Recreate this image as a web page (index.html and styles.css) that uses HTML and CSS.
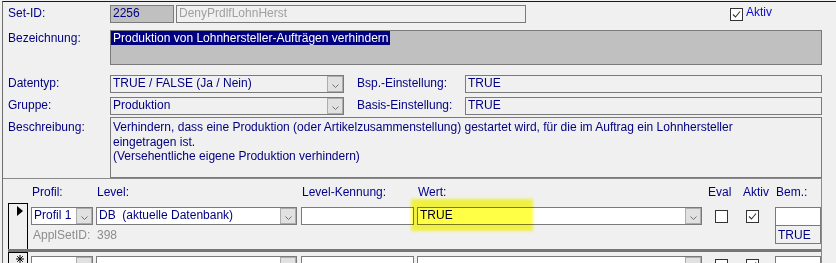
FILE: index.html
```html
<!DOCTYPE html>
<html lang="de">
<head>
<meta charset="utf-8">
<title>Set-ID 2256</title>
<link rel="stylesheet" href="styles.css">
</head>
<body>
<div class="form">
  <div class="row r1">
    <div class="lbl">Set-ID:</div>
    <div class="fld fld-id">2256</div>
    <div class="fld fld-name">DenyPrdlfLohnHerst</div>
    <div class="chk-top">
      <span class="cb"><svg width="11" height="11" viewBox="0 0 11 11"><polyline points="2,5.5 4.5,8 9,2.5" fill="none" stroke="#333" stroke-width="1.1"/></svg></span>
      <span class="chk-lbl">Aktiv</span>
    </div>
  </div>
  <div class="row r2">
    <div class="lbl lbl-bez">Bezeichnung:</div>
    <div class="fld fld-bez"><span class="sel">Produktion von Lohnhersteller-Aufträgen verhindern</span></div>
  </div>
  <div class="row r3">
    <div class="lbl">Datentyp:</div>
    <div class="combo combo-top"><span class="val">TRUE / FALSE (Ja / Nein)</span><span class="btn"><svg width="7" height="4" viewBox="0 0 7 4"><polyline points="0.5,0.5 3.5,3.5 6.5,0.5" fill="none" stroke="#707070" stroke-width="1"/></svg></span></div>
    <div class="lbl lbl2">Bsp.-Einstellung:</div>
    <div class="fld fld-set">TRUE</div>
  </div>
  <div class="row r4">
    <div class="lbl">Gruppe:</div>
    <div class="combo combo-top"><span class="val">Produktion</span><span class="btn"><svg width="7" height="4" viewBox="0 0 7 4"><polyline points="0.5,0.5 3.5,3.5 6.5,0.5" fill="none" stroke="#707070" stroke-width="1"/></svg></span></div>
    <div class="lbl lbl2">Basis-Einstellung:</div>
    <div class="fld fld-set">TRUE</div>
  </div>
  <div class="row r5">
    <div class="lbl lbl-desc">Beschreibung:</div>
    <div class="fld fld-desc">Verhindern, dass eine Produktion (oder Artikelzusammenstellung) gestartet wird, für die im Auftrag ein Lohnhersteller<br>eingetragen ist.<br>(Versehentliche eigene Produktion verhindern)</div>
  </div>

  <div class="sub">
    <div class="grid shead">
      <div></div>
      <div class="h">Profil:</div>
      <div class="h">Level:</div>
      <div class="h">Level-Kennung:</div>
      <div class="h">Wert:</div>
      <div class="h h0">Eval</div>
      <div class="h h0">Aktiv</div>
      <div class="h h0">Bem.:</div>
    </div>

    <div class="grid rec">
      <div class="selector"><span class="tri"></span></div>
      <div class="cell g2"><div class="combo combo-w c-profil"><span class="val">Profil 1</span><span class="btn"><svg width="7" height="4" viewBox="0 0 7 4"><polyline points="0.5,0.5 3.5,3.5 6.5,0.5" fill="none" stroke="#707070" stroke-width="1"/></svg></span></div></div>
      <div class="cell g3"><div class="combo combo-w c-level"><span class="val">DB&nbsp;&nbsp;(aktuelle Datenbank)</span><span class="btn"><svg width="7" height="4" viewBox="0 0 7 4"><polyline points="0.5,0.5 3.5,3.5 6.5,0.5" fill="none" stroke="#707070" stroke-width="1"/></svg></span></div></div>
      <div class="cell g4"><div class="fld fld-w c-kenn"></div></div>
      <div class="cell g5 wert-cell">
        <div class="combo combo-w c-wert"><span class="val">TRUE</span><span class="btn"><svg width="7" height="4" viewBox="0 0 7 4"><polyline points="0.5,0.5 3.5,3.5 6.5,0.5" fill="none" stroke="#707070" stroke-width="1"/></svg></span></div>
        <div class="marker"></div>
      </div>
      <div class="cell g6"><span class="cb cb-eval"></span></div>
      <div class="cell g7"><span class="cb cb-akt"><svg width="11" height="11" viewBox="0 0 11 11"><polyline points="2,5.5 4.5,8 9,2.5" fill="none" stroke="#333" stroke-width="1.1"/></svg></span></div>
      <div class="cell bem-cell"><div class="bem"><div class="bem-top"></div><div class="bem-val">TRUE</div></div></div>
      <div class="appl">ApplSetID:</div>
      <div class="appl appl-v">398</div>
    </div>

    <div class="grid rec rec-new">
      <div class="selector"><svg class="star" width="8" height="8" viewBox="0 0 8 8"><path d="M4 0V8M0 4H8M1.2 1.2L6.8 6.8M6.8 1.2L1.2 6.8" stroke="#000" stroke-width="1" fill="none"/></svg></div>
      <div class="cell g2"><div class="combo combo-w c-profil"><span class="val"></span><span class="btn"><svg width="7" height="4" viewBox="0 0 7 4"><polyline points="0.5,0.5 3.5,3.5 6.5,0.5" fill="none" stroke="#707070" stroke-width="1"/></svg></span></div></div>
      <div class="cell g3"><div class="combo combo-w c-level"><span class="val"></span><span class="btn"><svg width="7" height="4" viewBox="0 0 7 4"><polyline points="0.5,0.5 3.5,3.5 6.5,0.5" fill="none" stroke="#707070" stroke-width="1"/></svg></span></div></div>
      <div class="cell g4"><div class="fld fld-w c-kenn"></div></div>
      <div class="cell g5"><div class="combo combo-w c-wert"><span class="val"></span><span class="btn"><svg width="7" height="4" viewBox="0 0 7 4"><polyline points="0.5,0.5 3.5,3.5 6.5,0.5" fill="none" stroke="#707070" stroke-width="1"/></svg></span></div></div>
      <div class="cell g6"><span class="cb cb-eval"></span></div>
      <div class="cell g7"><span class="cb cb-akt"><svg width="11" height="11" viewBox="0 0 11 11"><polyline points="2,5.5 4.5,8 9,2.5" fill="none" stroke="#333" stroke-width="1.1"/></svg></span></div>
      <div class="cell bem-cell"><div class="bem"><div class="bem-top"></div></div></div>
    </div>
  </div>
</div>
</body>
</html>
```

FILE: styles.css
```css
html, body {
  margin: 0;
  padding: 0;
  overflow: hidden;
  background: #f0f0f0;
}
body {
  font-family: "Liberation Sans", Arial, sans-serif;
  font-size: 12px;
  color: #000080;
  width: 836px;
  height: 263px;
}
.form {
  box-sizing: border-box;
  margin: 1px 0 0 2px;
  height: 262px;
  overflow: hidden;
  border-top: 1px solid #1a1a1a;
  border-left: 1px solid #6e6e6e;
  padding-left: 5px;
}
.row {
  display: flex;
  align-items: flex-start;
}
.r1 { margin-top: 3px; }
.r2 { margin-top: 7px; }
.r3 { margin-top: 10px; }
.r4 { margin-top: 4px; }
.r5 { margin-top: 2px; }

.lbl {
  width: 102px;
  flex: none;
  padding-top: 1px;
  line-height: 15px;
  white-space: nowrap;
  color: #000080;
}
.lbl-bez { line-height: 14px; }
.lbl-desc { padding-top: 3px; line-height: 14px; }
.lbl2 {
  margin-left: 13px;
  width: 108px;
}

.fld {
  box-sizing: border-box;
  height: 18px;
  border: 1px solid #7a7a7a;
  padding-left: 2px;
  line-height: 15px;
  white-space: nowrap;
  overflow: hidden;
  color: #000080;
  flex: none;
}
.fld-id {
  width: 64px;
  background: #c0c0c0;
}
.fld-name {
  width: 350px;
  margin-left: 2px;
  color: #a0a0a0;
  background: #f0f0f0;
}
.fld-bez {
  width: 712px;
  height: 35px;
  background: #c0c0c0;
  padding-left: 0;
  line-height: 14px;
}
.sel {
  background: #000080;
  color: #fff;
  padding: 0 1px 0 2px;
}
.fld-set {
  width: 357px;
  background: #f0f0f0;
}
.fld-desc {
  width: 712px;
  height: 61px;
  padding: 2px 2px 0 2px;
  line-height: 14.5px;
  white-space: normal;
}

.chk-top {
  display: flex;
  align-items: flex-start;
  margin-left: 204px;
}
.chk-top .cb { margin-top: 3px; }
.chk-lbl {
  margin-left: 3px;
  line-height: 15px;
  color: #0a0ad0;
}

.cb {
  display: inline-flex;
  align-items: center;
  justify-content: center;
  box-sizing: border-box;
  width: 13px;
  height: 13px;
  border: 1px solid #333;
  background: #fff;
}

.combo {
  display: flex;
  box-sizing: border-box;
  height: 18px;
  border: 1px solid #7a7a7a;
  background: #f0f0f0;
  flex: none;
}
.combo .val {
  flex: 1;
  padding-left: 2px;
  line-height: 15px;
  white-space: nowrap;
  overflow: hidden;
  color: #000080;
}
.combo .btn {
  width: 16px;
  box-sizing: border-box;
  border: 1px solid #adadad;
  background: #e1e1e1;
  display: flex;
  align-items: center;
  justify-content: center;
}
.combo .btn svg { margin-top: 3px; }
.combo-top { width: 234px; }

/* subform */
.sub {
  margin-left: -5px;
  box-sizing: border-box;
  width: 819px;
  border-top: 1px solid #8a8a8a;
  border-right: 1px solid #8a8a8a;
  padding-left: 5px;
}
.grid {
  display: grid;
  grid-template-columns: 23px 65px 205px 116px 291px 35px 33px 45px;
}
.shead {
  height: 24px;
}
.h {
  padding: 6px 0 0 1px;
  line-height: 14px;
  white-space: nowrap;
  color: #00008c;
}
.h0 { padding-left: 0; }

.rec {
  grid-template-rows: 22px 24px;
  border-bottom: 3px solid #767676;
}
.rec-new {
  border-bottom: none;
}
.selector {
  grid-column: 1;
  grid-row: 1 / 3;
  box-sizing: border-box;
  width: 20px;
  border: 1px solid #000;
  border-bottom: none;
  background: #f0f0f0;
}
.tri {
  display: block;
  width: 0;
  height: 0;
  margin: 2px 0 0 8px;
  border-left: 6px solid #000;
  border-top: 5px solid transparent;
  border-bottom: 5px solid transparent;
}
.star {
  display: block;
  margin: 2px 0 0 7px;
}
.cell {
  grid-row: 1;
  padding-top: 4px;
}
.g2 { grid-column: 2; }
.g3 { grid-column: 3; }
.g4 { grid-column: 4; }
.g5 { grid-column: 5; }
.g6 { grid-column: 6; }
.g7 { grid-column: 7; }
.combo-w { background: #fff; }
.fld-w { background: #fff; }
.c-profil { width: 62px; }
.c-level { width: 201px; }
.c-kenn { width: 113px; }
.c-wert { width: 285px; }
.wert-cell { position: relative; }
.marker {
  position: absolute;
  left: -6px;
  top: -4px;
  width: 122px;
  height: 32px;
  background: rgb(255, 255, 70);
  mix-blend-mode: multiply;
  filter: blur(1.5px);
  pointer-events: none;
}
.cb-eval { margin: 3px 0 0 7px; }
.cb-akt { margin: 3px 0 0 3px; }

.bem-cell {
  grid-column: 8;
  grid-row: 1 / 3;
}
.bem {
  margin-left: -1px;
  width: 46px;
  box-sizing: border-box;
  border: 1px solid #7a7a7a;
}
.bem-top {
  height: 17px;
  background: #fff;
  border-bottom: 1px solid #7a7a7a;
}
.rec-new .bem-top { border-bottom: none; }
.bem-val {
  height: 17px;
  padding: 2px 0 0 2px;
  box-sizing: border-box;
  line-height: 14px;
  color: #000080;
}
.appl {
  grid-column: 2;
  grid-row: 2;
  padding: 3px 0 0 2px;
  line-height: 14px;
  color: #8c8c8c;
  white-space: nowrap;
}
.appl-v {
  grid-column: 3;
  padding-left: 1px;
}
```
